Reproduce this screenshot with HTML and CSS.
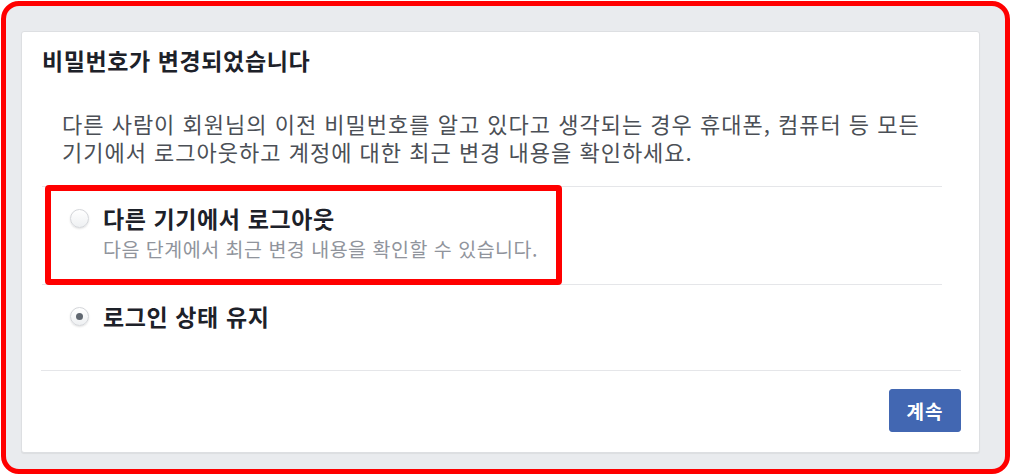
FILE: index.html
```html
<!DOCTYPE html>
<html lang="ko">
<head>
<meta charset="utf-8">
<title>비밀번호가 변경되었습니다</title>
<link rel="stylesheet" href="styles.css">
</head>
<body>
<div class="frame">
  <div class="card">
    <div class="card-header">비밀번호가 변경되었습니다</div>
    <p class="card-desc">다른 사람이 회원님의 이전 비밀번호를 알고 있다고 생각되는 경우 휴대폰, 컴퓨터 등 모든 기기에서 로그아웃하고 계정에 대한 최근 변경 내용을 확인하세요.</p>
    <div class="options">
      <label class="option">
        <span class="radio"></span>
        <span class="option-text">
          <span class="option-title">다른 기기에서 로그아웃</span>
          <span class="option-sub">다음 단계에서 최근 변경 내용을 확인할 수 있습니다.</span>
        </span>
      </label>
      <label class="option">
        <span class="radio checked"></span>
        <span class="option-text">
          <span class="option-title">로그인 상태 유지</span>
        </span>
      </label>
    </div>
    <div class="card-footer">
      <button class="btn-primary" type="button">계속</button>
    </div>
    <div class="highlight"></div>
  </div>
</div>
</body>
</html>
```

FILE: styles.css
```css
html, body {
  margin: 0;
  padding: 0;
  background: #ffffff;
}

body {
  font-family: "Noto Sans CJK KR", "Noto Sans", sans-serif;
  width: 1011px;
  height: 476px;
  overflow: hidden;
}

.frame {
  box-sizing: border-box;
  margin: 1px 0 0 1px;
  width: 1009px;
  height: 473px;
  border: 5px solid #ff0000;
  border-radius: 18px;
  background: #e9ebee;
  padding: 25px 0 0 15px;
}

.card {
  position: relative;
  box-sizing: border-box;
  width: 959px;
  background: #ffffff;
  border: 1px solid #dddfe2;
  border-radius: 3px;
  box-shadow: 0 1px 1px rgba(0, 0, 0, 0.06);
}

.card-header {
  padding: 13px 20px 0;
  font-size: 23px;
  line-height: 30px;
  letter-spacing: 0.6px;
  font-weight: 700;
  color: #1d2129;
}

.card-desc {
  margin: 34px 20px 0 40px;
  font-size: 22px;
  line-height: 28px;
  letter-spacing: 1px;
  color: #4b4f56;
  word-break: keep-all;
}

.options {
  margin: 21px 37px 0 20px;
  border-top: 1px solid #e5e6e9;
}

.option {
  display: flex;
  align-items: flex-start;
  gap: 14px;
  padding: 17px 0 23px 28px;
  border-bottom: 1px solid #e5e6e9;
}

.option:last-child {
  border-bottom: none;
  padding-bottom: 40px;
}

.radio {
  flex: none;
  box-sizing: border-box;
  width: 19px;
  height: 19px;
  margin-top: 5px;
  border-radius: 50%;
  border: 1px solid #d4d6da;
  background: linear-gradient(#ffffff, #eef0f2);
  box-shadow: 0 1px 2px rgba(0, 0, 0, 0.12);
  display: flex;
  align-items: center;
  justify-content: center;
}

.radio.checked::after {
  content: "";
  width: 7px;
  height: 7px;
  border-radius: 50%;
  background: #606770;
}

.option-text {
  display: flex;
  flex-direction: column;
}

.option-title {
  font-size: 23px;
  line-height: 28px;
  letter-spacing: 0.6px;
  font-weight: 700;
  color: #1d2129;
}

.option-sub {
  margin-top: 5px;
  font-size: 19.5px;
  line-height: 24px;
  letter-spacing: 0.5px;
  color: #90949c;
}

.card-footer {
  margin: 0 18px 0 19px;
  border-top: 1px solid #e5e6e9;
  padding: 18px 0 20px;
  display: flex;
  justify-content: flex-end;
}

.btn-primary {
  font-family: inherit;
  height: 43px;
  width: 72px;
  padding: 0;
  border: 1px solid #4267b2;
  border-radius: 3px;
  background: #4267b2;
  color: #ffffff;
  font-size: 19px;
  letter-spacing: 1px;
  font-weight: 700;
}

.highlight {
  position: absolute;
  left: 23px;
  top: 153px;
  width: 517px;
  height: 100px;
  box-sizing: border-box;
  border: 6px solid #ff0000;
  border-radius: 4px;
  pointer-events: none;
}
```
